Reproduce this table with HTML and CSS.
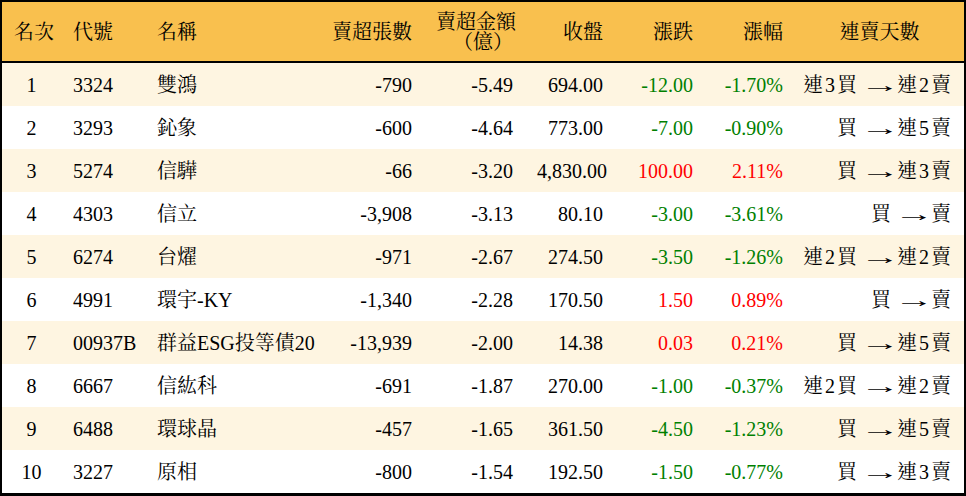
FILE: index.html
```html
<!DOCTYPE html>
<html lang="zh-Hant">
<head>
<meta charset="utf-8">
<title>賣超排行</title>
<link rel="stylesheet" href="styles.css">
</head>
<body>
<table class="rank">
  <colgroup>
    <col class="c1"><col class="c2"><col class="c3"><col class="c4"><col class="c5"><col class="c6"><col class="c7"><col class="c8"><col class="c9">
  </colgroup>
  <thead>
    <tr>
      <th class="ctr">名次</th>
      <th class="lft">代號</th>
      <th class="lft">名稱</th>
      <th class="rgt">賣超張數</th>
      <th class="rgt">賣超金額<br>（億）</th>
      <th class="rgt">收盤</th>
      <th class="rgt">漲跌</th>
      <th class="rgt">漲幅</th>
      <th class="ctr">連賣天數</th>
    </tr>
  </thead>
  <tbody>
    <tr><td class="ctr">1</td><td>3324</td><td>雙鴻</td><td class="rgt">-790</td><td class="rgt">-5.49</td><td class="rgt">694.00</td><td class="rgt down">-12.00</td><td class="rgt down">-1.70%</td><td class="rgt streak">連 3 買<span class="arr">→</span>連 2 賣</td></tr>
    <tr><td class="ctr">2</td><td>3293</td><td>鈊象</td><td class="rgt">-600</td><td class="rgt">-4.64</td><td class="rgt">773.00</td><td class="rgt down">-7.00</td><td class="rgt down">-0.90%</td><td class="rgt streak">買<span class="arr">→</span>連 5 賣</td></tr>
    <tr><td class="ctr">3</td><td>5274</td><td>信驊</td><td class="rgt">-66</td><td class="rgt">-3.20</td><td class="rgt">4,830.00</td><td class="rgt up">100.00</td><td class="rgt up">2.11%</td><td class="rgt streak">買<span class="arr">→</span>連 3 賣</td></tr>
    <tr><td class="ctr">4</td><td>4303</td><td>信立</td><td class="rgt">-3,908</td><td class="rgt">-3.13</td><td class="rgt">80.10</td><td class="rgt down">-3.00</td><td class="rgt down">-3.61%</td><td class="rgt streak">買<span class="arr">→</span>賣</td></tr>
    <tr><td class="ctr">5</td><td>6274</td><td>台燿</td><td class="rgt">-971</td><td class="rgt">-2.67</td><td class="rgt">274.50</td><td class="rgt down">-3.50</td><td class="rgt down">-1.26%</td><td class="rgt streak">連 2 買<span class="arr">→</span>連 2 賣</td></tr>
    <tr><td class="ctr">6</td><td>4991</td><td>環宇-KY</td><td class="rgt">-1,340</td><td class="rgt">-2.28</td><td class="rgt">170.50</td><td class="rgt up">1.50</td><td class="rgt up">0.89%</td><td class="rgt streak">買<span class="arr">→</span>賣</td></tr>
    <tr><td class="ctr">7</td><td>00937B</td><td>群益ESG投等債20</td><td class="rgt">-13,939</td><td class="rgt">-2.00</td><td class="rgt">14.38</td><td class="rgt up">0.03</td><td class="rgt up">0.21%</td><td class="rgt streak">買<span class="arr">→</span>連 5 賣</td></tr>
    <tr><td class="ctr">8</td><td>6667</td><td>信紘科</td><td class="rgt">-691</td><td class="rgt">-1.87</td><td class="rgt">270.00</td><td class="rgt down">-1.00</td><td class="rgt down">-0.37%</td><td class="rgt streak">連 2 買<span class="arr">→</span>連 2 賣</td></tr>
    <tr><td class="ctr">9</td><td>6488</td><td>環球晶</td><td class="rgt">-457</td><td class="rgt">-1.65</td><td class="rgt">361.50</td><td class="rgt down">-4.50</td><td class="rgt down">-1.23%</td><td class="rgt streak">買<span class="arr">→</span>連 5 賣</td></tr>
    <tr><td class="ctr">10</td><td>3227</td><td>原相</td><td class="rgt">-800</td><td class="rgt">-1.54</td><td class="rgt">192.50</td><td class="rgt down">-1.50</td><td class="rgt down">-0.77%</td><td class="rgt streak">買<span class="arr">→</span>連 3 賣</td></tr>
  </tbody>
</table>
</body>
</html>
```
FILE: styles.css
```css
html, body {
  margin: 0;
  padding: 0;
  background: #ffffff;
}
.rank {
  width: 966px;
  border: 2px solid #000;
  border-bottom-width: 3px;
  border-collapse: separate;
  border-spacing: 0;
  table-layout: fixed;
  font-family: "Liberation Serif", "Noto Serif CJK TC", "Noto Sans CJK TC", serif;
  font-size: 20px;
  color: #000;
}
.c1 { width: 59px; }
.c2 { width: 84px; }
.c3 { width: 175px; }
.c4 { width: 104px; }
.c5 { width: 101px; }
.c6 { width: 90px; }
.c7 { width: 90px; }
.c8 { width: 90px; }
.c9 { width: 169px; }
.rank th {
  background: #f9c04e;
  height: 59px;
  padding: 0 12px;
  font-weight: normal;
  line-height: 20px;
  border-bottom: 2px solid #000;
  vertical-align: middle;
  white-space: nowrap;
}
.rank td {
  height: 43px;
  padding: 0 12px;
  vertical-align: middle;
  white-space: nowrap;
  text-align: left;
  line-height: 22px;
}
.rank tbody tr:nth-child(odd) td {
  background: #fef5e1;
}
.rank td.streak {
  padding-left: 0;
  padding-right: 13px;
  word-spacing: -3px;
}
.arr {
  display: inline-block;
  margin: 0 7px 0 13px;
  transform: scaleX(2);
}
.lft { text-align: left; }
.rank .ctr { text-align: center; }
.rank .rgt { text-align: right; }
.down { color: #008000; }
.up { color: #ff0000; }
```
